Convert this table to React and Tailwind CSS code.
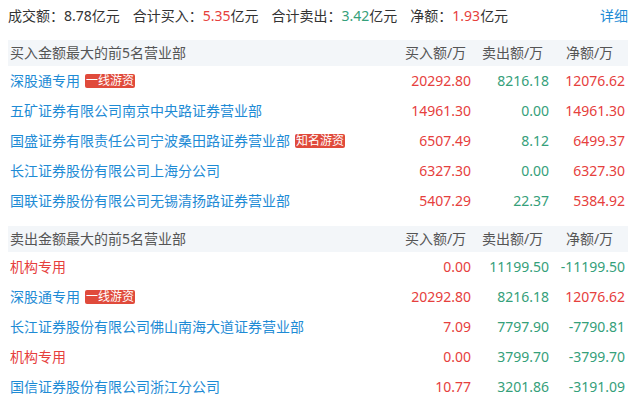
const buyRows = [
  { name: "深股通专用", tag: "一线游资", buy: "20292.80", sell: "8216.18", net: "12076.62" },
  { name: "五矿证券有限公司南京中央路证券营业部", buy: "14961.30", sell: "0.00", net: "14961.30" },
  { name: "国盛证券有限责任公司宁波桑田路证券营业部", tag: "知名游资", buy: "6507.49", sell: "8.12", net: "6499.37" },
  { name: "长江证券股份有限公司上海分公司", buy: "6327.30", sell: "0.00", net: "6327.30" },
  { name: "国联证券股份有限公司无锡清扬路证券营业部", buy: "5407.29", sell: "22.37", net: "5384.92" },
];

const sellRows = [
  { name: "机构专用", inst: true, buy: "0.00", sell: "11199.50", net: "-11199.50" },
  { name: "深股通专用", tag: "一线游资", buy: "20292.80", sell: "8216.18", net: "12076.62" },
  { name: "长江证券股份有限公司佛山南海大道证券营业部", buy: "7.09", sell: "7797.90", net: "-7790.81" },
  { name: "机构专用", inst: true, buy: "0.00", sell: "3799.70", net: "-3799.70" },
  { name: "国信证券股份有限公司浙江分公司", buy: "10.77", sell: "3201.86", net: "-3191.09" },
];

const RED = "text-[#e6403d]";
const GREEN = "text-[#35a07a]";

const Section = ({ title, rows }) => (
  <div>
    {/* Header band */}
    <div className="grid h-[26px] grid-cols-[1fr_77px_77px_77px] items-center bg-[#f3f6f9] text-[#555]">
      <span className="pl-[2px]">{title}</span>
      <span className="text-center">买入额/万</span>
      <span className="text-center">卖出额/万</span>
      <span className="text-center">净额/万</span>
    </div>
    {rows.map((row, idx) => (
      <div
        key={idx}
        className="grid h-[30px] grid-cols-[1fr_77px_77px_77px] items-center"
      >
        <div className="flex items-center gap-[5px] pl-[2px]">
          <span className={row.inst ? RED : "text-[#1e8bd5]"}>{row.name}</span>
          {row.tag && (
            <span className="rounded-[2px] bg-[#e04a3b] px-[1px] text-[12px] leading-[14px] text-white">
              {row.tag}
            </span>
          )}
        </div>
        <span className={`pr-[3px] text-right ${RED}`}>{row.buy}</span>
        <span className={`pr-[2px] text-right ${GREEN}`}>{row.sell}</span>
        <span
          className={`pr-[3px] text-right ${row.net.startsWith("-") ? GREEN : RED}`}
        >
          {row.net}
        </span>
      </div>
    ))}
  </div>
);

export default function App() {
  return (
    <div
      className="h-[399px] w-[637px] overflow-hidden bg-white pl-[8px] pr-[9px] text-[14px] leading-[20px] text-[#333]"
      style={{ fontFamily: '"Noto Sans", "Noto Sans CJK SC", sans-serif' }}
    >
      {/* Summary line */}
      <div className="flex h-[30px] items-center gap-[13px] pt-[1px]">
        <span>
          成交额：<span>8.78</span>亿元
        </span>
        <span>
          合计买入：<span className={RED}>5.35</span>亿元
        </span>
        <span>
          合计卖出：<span className={GREEN}>3.42</span>亿元
        </span>
        <span>
          净额：<span className={RED}>1.93</span>亿元
        </span>
        <span className="ml-auto text-[#1e8bd5]">详细</span>
      </div>
      <div className="mt-[10px] flex flex-col gap-[10px]">
        <Section title="买入金额最大的前5名营业部" rows={buyRows} />
        <Section title="卖出金额最大的前5名营业部" rows={sellRows} />
      </div>
    </div>
  );
}
